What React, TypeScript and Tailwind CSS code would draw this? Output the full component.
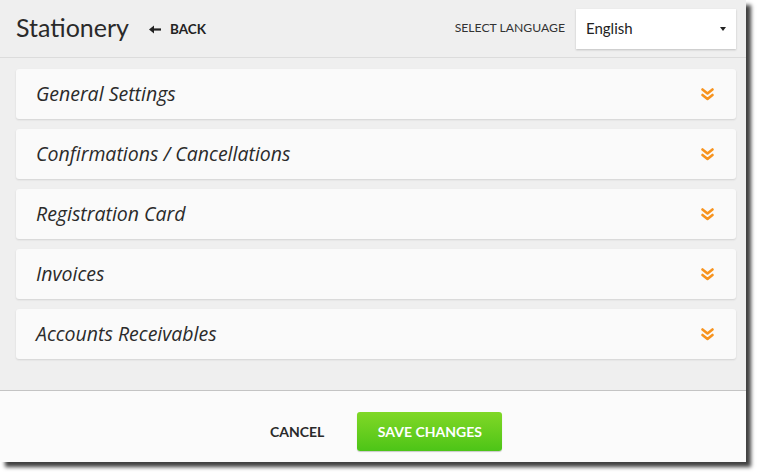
import React from "react";

const sections = [
  "General Settings",
  "Confirmations / Cancellations",
  "Registration Card",
  "Invoices",
  "Accounts Receivables",
];

function DoubleChevron() {
  return (
    <svg width="13" height="13" viewBox="0 0 13 13" fill="none">
      <path d="M1.5 1.5 L6.5 5.5 L11.5 1.5" stroke="#f7931e" strokeWidth="2.6" strokeLinecap="round" strokeLinejoin="round" />
      <path d="M1.5 7 L6.5 11 L11.5 7" stroke="#f7931e" strokeWidth="2.6" strokeLinecap="round" strokeLinejoin="round" />
    </svg>
  );
}

function BackArrow() {
  return (
    <svg width="12" height="9" viewBox="0 0 12 9">
      <path d="M0 4.5 L5 0.5 L5 8.5 Z" fill="#222" />
      <rect x="4" y="3.4" width="8" height="2.2" fill="#222" />
    </svg>
  );
}

export default function App() {
  return (
    <div className="w-[757px] h-[472px] bg-white" style={{ fontFamily: "Lato, 'Open Sans', sans-serif" }}>
      <div className="w-[746px] h-[462px] flex flex-col bg-[#efefef] shadow-[5px_5px_4px_rgba(0,0,0,0.75)]">
        <div className="h-[58px] flex items-center pl-4 pr-[10px] border-b border-[#dcdcdc]">
          <div className="text-[25px] text-[#2a2a2a] leading-none mt-[-2px]">Stationery</div>
          <div className="flex items-center gap-[9px] ml-[20px] mt-[1px]">
            <BackArrow />
            <span className="text-[13.5px] font-bold text-[#222]">BACK</span>
          </div>
          <div className="ml-auto flex items-center">
            <span className="text-[12.2px] text-[#333] mr-[11px]">SELECT LANGUAGE</span>
            <div className="w-[160px] h-[40px] bg-white shadow-[0_1px_2px_rgba(0,0,0,0.2)] flex items-center pl-[10px] pr-[10px]">
              <span className="text-[15px] text-[#222]">English</span>
              <svg className="ml-auto" width="6" height="4" viewBox="0 0 6 4">
                <path d="M0 0 L6 0 L3 4 Z" fill="#222" />
              </svg>
            </div>
          </div>
        </div>
        <div className="flex-1 flex flex-col gap-[10px] pt-[11px] pl-4 pr-[10px]">
          {sections.map((s) => (
            <div
              key={s}
              className="h-[50px] bg-[#fafafa] rounded-[3px] shadow-[0_1px_2px_rgba(0,0,0,0.12)] flex items-center pl-5 pr-[22px]"
            >
              <span className="italic text-[19.5px] text-[#2b2b2b]" style={{ fontFamily: "'Open Sans', sans-serif" }}>{s}</span>
              <span className="ml-auto">
                <DoubleChevron />
              </span>
            </div>
          ))}
        </div>
        <div className="h-[72px] bg-[#fbfbfb] border-t border-[#c4c4c4] flex items-start pt-[21px] pl-[270px]">
          <div className="h-[39px] flex items-center text-[14px] font-bold text-[#2a2a2a]">CANCEL</div>
          <div className="ml-[33px] w-[145px] h-[39px] rounded-[3px] bg-gradient-to-b from-[#80d826] to-[#4cc417] shadow-[0_1px_1px_rgba(0,0,0,0.2)] flex items-center justify-center text-[14px] font-bold text-white">
            SAVE CHANGES
          </div>
        </div>
      </div>
    </div>
  );
}
